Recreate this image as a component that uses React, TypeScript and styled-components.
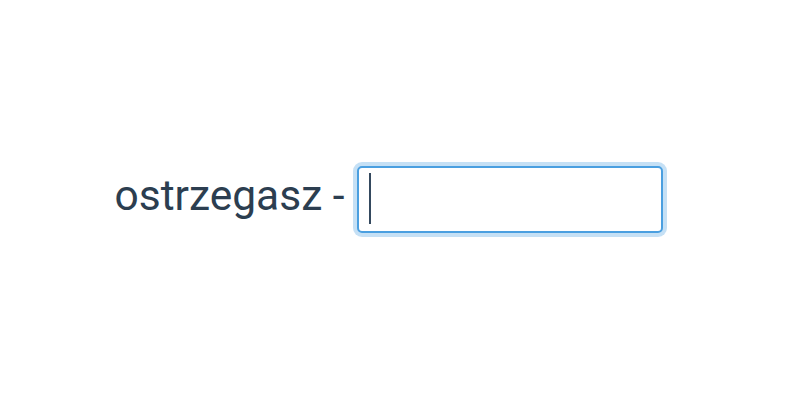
import React from 'react'
import styled, { createGlobalStyle } from 'styled-components'

const GlobalStyle = createGlobalStyle`
  html, body {
    margin: 0;
    padding: 0;
    background: #ffffff;
  }
  body {
    font-family: Roboto, 'Liberation Sans', sans-serif;
  }
`

const Page = styled.div`
  width: 800px;
  height: 400px;
  display: flex;
  align-items: center;
  justify-content: center;
  padding-right: 23px;
  padding-bottom: 1px;
  box-sizing: border-box;
`

const Row = styled.div`
  display: flex;
  align-items: center;
  gap: 12px;
`

const Label = styled.span`
  font-size: 42.5px;
  color: #2c3e50;
  line-height: 1;
  margin-top: -6px;
`

const Field = styled.div`
  position: relative;
  width: 306px;
  height: 67px;
  box-sizing: border-box;
  border: 2px solid #4a9fe0;
  border-radius: 5px;
  box-shadow: 0 0 0 4px rgba(74, 159, 224, 0.32);
  background: #ffffff;
`

const Input = styled.input`
  width: 100%;
  height: 100%;
  box-sizing: border-box;
  border: none;
  outline: none;
  background: transparent;
  padding: 0 10px;
  font-family: Roboto, 'Liberation Sans', sans-serif;
  font-size: 36px;
  color: #2c3e50;
  caret-color: transparent;
`

const Caret = styled.span`
  position: absolute;
  left: 10px;
  top: 5px;
  width: 2px;
  height: 51px;
  background: #34495e;
`

const App: React.FC = () => {
  return (
    <>
      <GlobalStyle />
      <Page>
        <Row>
          <Label>ostrzegasz -</Label>
          <Field>
            <Input type="text" />
            <Caret />
          </Field>
        </Row>
      </Page>
    </>
  )
}

export default App
